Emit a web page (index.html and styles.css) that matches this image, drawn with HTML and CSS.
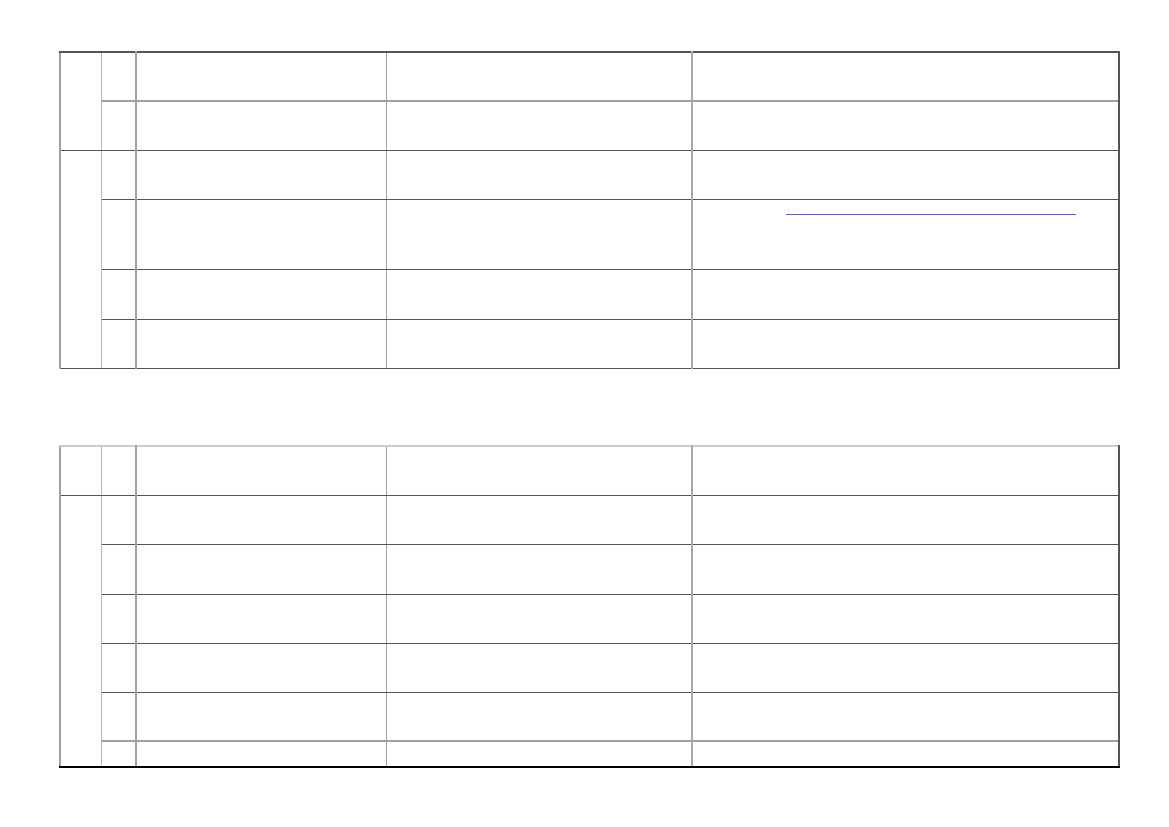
FILE: index.html
```html
<!DOCTYPE html>
<html lang="en">
<head>
  <meta charset="UTF-8">
  <title>Tables</title>
  <link rel="stylesheet" href="styles.css">
</head>
<body>

  <div class="page">
    <table class="grid first">
      <colgroup>
        <col class="c1"><col class="c2"><col class="c3"><col class="c4"><col class="c5">
      </colgroup>
      <tbody>
        <tr class="r">
          <td rowspan="2" class="group"></td>
          <td class="num"></td><td class="mid"></td><td class="mid light"></td><td class="last"></td>
        </tr>
        <tr class="r soft">
          <td class="num"></td><td class="mid"></td><td class="mid light"></td><td class="last"></td>
        </tr>
        <tr class="r">
          <td rowspan="4" class="group"></td>
          <td class="num"></td><td class="mid"></td><td class="mid light"></td><td class="last"></td>
        </tr>
        <tr class="r tall">
          <td class="num"></td><td class="mid"></td><td class="mid light"></td>
          <td class="last"><a href="#" class="link"></a></td>
        </tr>
        <tr class="r wide">
          <td class="num"></td><td class="mid"></td><td class="mid light"></td><td class="last"></td>
        </tr>
        <tr class="r">
          <td class="num"></td><td class="mid"></td><td class="mid light"></td><td class="last"></td>
        </tr>
      </tbody>
    </table>

    <table class="grid second">
      <colgroup>
        <col class="c1"><col class="c2"><col class="c3"><col class="c4"><col class="c5">
      </colgroup>
      <tbody>
        <tr class="r head">
          <td class="group"></td>
          <td class="num"></td><td class="mid"></td><td class="mid light"></td><td class="last"></td>
        </tr>
        <tr class="r">
          <td rowspan="6" class="group"></td>
          <td class="num"></td><td class="mid"></td><td class="mid light"></td><td class="last"></td>
        </tr>
        <tr class="r wide">
          <td class="num"></td><td class="mid"></td><td class="mid light"></td><td class="last"></td>
        </tr>
        <tr class="r">
          <td class="num"></td><td class="mid"></td><td class="mid light"></td><td class="last"></td>
        </tr>
        <tr class="r">
          <td class="num"></td><td class="mid"></td><td class="mid light"></td><td class="last"></td>
        </tr>
        <tr class="r">
          <td class="num"></td><td class="mid"></td><td class="mid light"></td><td class="last"></td>
        </tr>
        <tr class="r short soft">
          <td class="num"></td><td class="mid"></td><td class="mid light"></td><td class="last"></td>
        </tr>
      </tbody>
    </table>
  </div>

</body>
</html>
```

FILE: styles.css
```css
body {
  margin: 0;
  font-family: "Liberation Sans", Arial, sans-serif;
  font-size: 13px;
  background: #ffffff;
}

.page {
  padding: 51px 0 0 59px;
  display: flex;
  flex-direction: column;
  gap: 76px;
}

table.grid {
  border-collapse: collapse;
  table-layout: fixed;
  width: 1061px;
}

.c1 { width: 41px; }
.c2 { width: 35px; }
.c3 { width: 250px; }
.c4 { width: 306px; }
.c5 { width: auto; }

td {
  padding: 0;
  border: 1px solid #555555;
  border-left-color: #a0a0a0;
  border-right-color: #a0a0a0;
  vertical-align: top;
}

td.group {
  border-left: 2px solid #a0a0a0;
  border-right-color: #b8b8b8;
}

td.num {
  border-right: 2px solid #a0a0a0;
}

td.mid.light {
  border-left-color: #b8b8b8;
  border-right: 2px solid #a8a8a8;
}

td.last {
  border-right: 2px solid #555555;
  padding: 0 0 0 93px;
}

tr.r { height: 49px; }
tr.wide { height: 50px; }
tr.head { height: 49.5px; }
tr.tall { height: 70px; }
tr.short { height: 26px; }

tr.soft td:not(.group) {
  border-top: 2px solid #a0a0a0;
}

.first tr:first-child td {
  border-top: 2px solid #555555;
}

.second tr:first-child td {
  border-top: 2px solid #cccccc;
}

.second tr:last-child td,
.second td.group[rowspan] {
  border-bottom: 2px solid #000000;
}

.link {
  display: inline-block;
  width: 290px;
  height: 14px;
  border-bottom: 1px solid #5555ff;
}
```
